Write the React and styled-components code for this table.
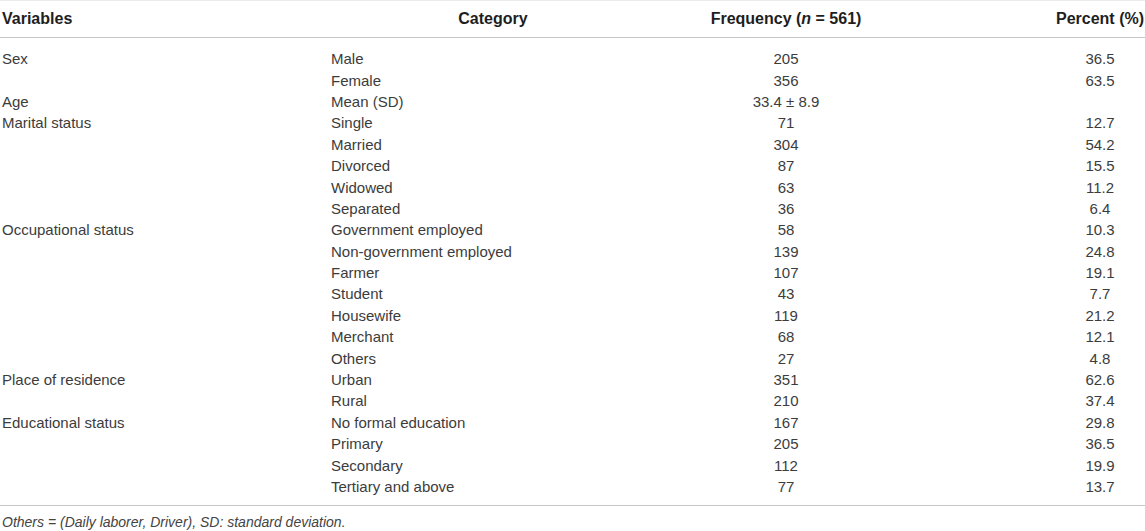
import styled, { createGlobalStyle } from "styled-components";

const GlobalStyle = createGlobalStyle`
  html, body {
    margin: 0;
    padding: 0;
    background: #ffffff;
  }
  body {
    font-family: "Liberation Sans", Arial, sans-serif;
  }
`;

const Table = styled.div`
  width: 1145px;
  border-top: 1px solid #ececec;
`;

const Row = styled.div`
  display: grid;
  grid-template-columns: 329px 324px 262px 1fr;
  padding-left: 2px;
  align-items: center;
`;

const HeadRow = styled(Row)`
  height: 36px;
  font-size: 16px;
  font-weight: 700;
  color: #1e1e1e;
  border-bottom: 1px solid #c6c6c6;
`;

const Body = styled.div`
  padding: 10px 0 8px;
  border-bottom: 1px solid #c6c6c6;
`;

const BodyRow = styled(Row)`
  height: 21.4px;
  font-size: 15px;
  color: #3c3c3c;
`;

const Cell = styled.div`
  white-space: nowrap;
  text-align: ${(p) => (p.$center ? "center" : "left")};
  padding-left: ${(p) => (p.$percent ? "138px" : "0")};
`;

const Note = styled.div`
  padding: 6px 0 0 2px;
  font-size: 14px;
  line-height: 20px;
  font-style: italic;
  color: #444;
`;

const rows = [
  ["Sex", "Male", "205", "36.5"],
  ["", "Female", "356", "63.5"],
  ["Age", "Mean (SD)", "33.4 ± 8.9", ""],
  ["Marital status", "Single", "71", "12.7"],
  ["", "Married", "304", "54.2"],
  ["", "Divorced", "87", "15.5"],
  ["", "Widowed", "63", "11.2"],
  ["", "Separated", "36", "6.4"],
  ["Occupational status", "Government employed", "58", "10.3"],
  ["", "Non-government employed", "139", "24.8"],
  ["", "Farmer", "107", "19.1"],
  ["", "Student", "43", "7.7"],
  ["", "Housewife", "119", "21.2"],
  ["", "Merchant", "68", "12.1"],
  ["", "Others", "27", "4.8"],
  ["Place of residence", "Urban", "351", "62.6"],
  ["", "Rural", "210", "37.4"],
  ["Educational status", "No formal education", "167", "29.8"],
  ["", "Primary", "205", "36.5"],
  ["", "Secondary", "112", "19.9"],
  ["", "Tertiary and above", "77", "13.7"],
];

const App = () => {
  return (
    <>
      <GlobalStyle />
      <Table>
        <HeadRow>
          <Cell>Variables</Cell>
          <Cell $center>Category</Cell>
          <Cell $center>
            Frequency (<i>n</i> = 561)
          </Cell>
          <Cell $center $percent>Percent (%)</Cell>
        </HeadRow>
        <Body>
          {rows.map((r, i) => (
            <BodyRow key={i}>
              <Cell>{r[0]}</Cell>
              <Cell>{r[1]}</Cell>
              <Cell $center>{r[2]}</Cell>
              <Cell $center $percent>{r[3]}</Cell>
            </BodyRow>
          ))}
        </Body>
        <Note>Others = (Daily laborer, Driver), SD: standard deviation.</Note>
      </Table>
    </>
  );
};

export default App;
